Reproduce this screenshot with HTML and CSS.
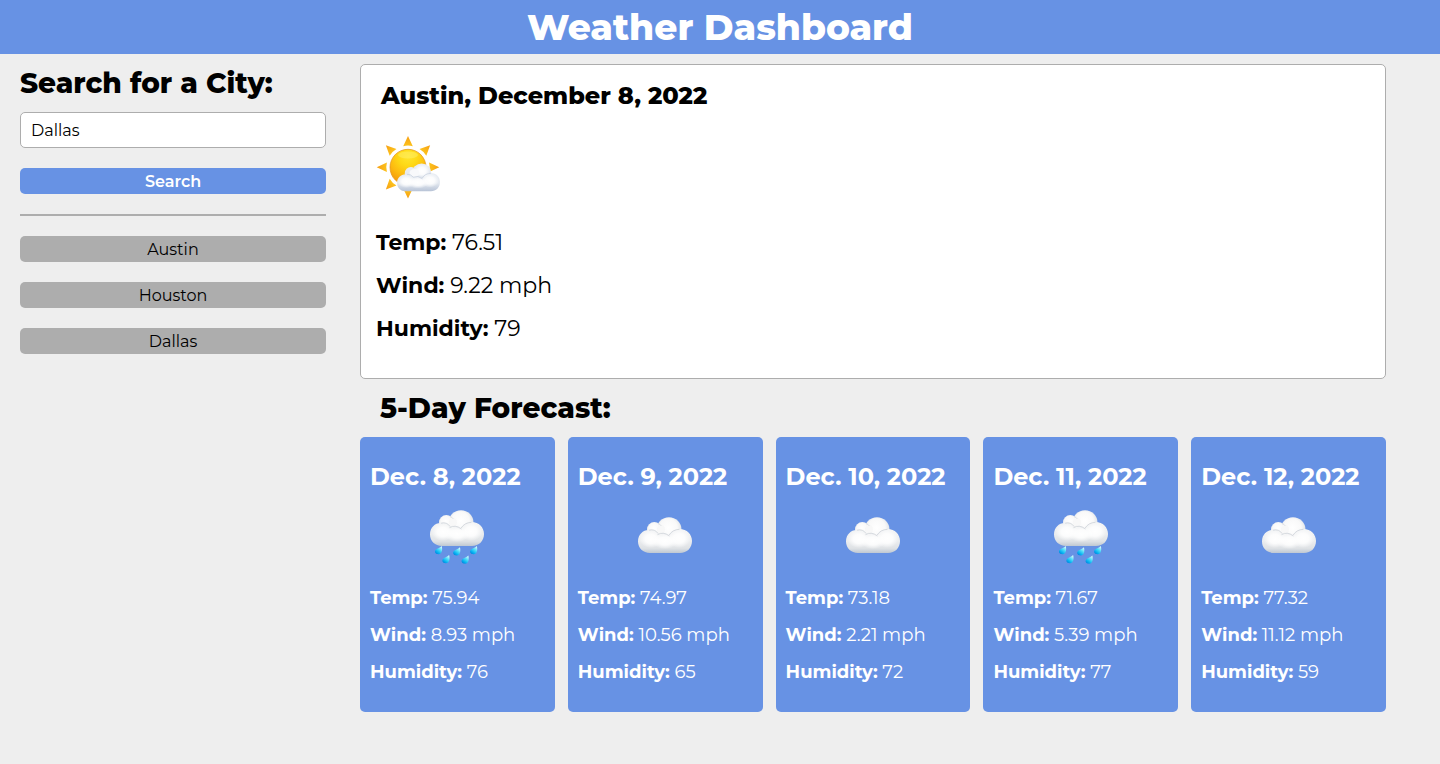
FILE: index.html
```html
<!DOCTYPE html>
<html lang="en">
<head>
<meta charset="utf-8">
<meta name="viewport" content="width=device-width, initial-scale=1">
<title>Weather Dashboard</title>
<link rel="stylesheet" href="styles.css">
</head>
<body>
<svg class="sprite" aria-hidden="true">
  <defs>
    <radialGradient id="sun-fill" cx="0.5" cy="0.2" r="0.85">
      <stop offset="0" stop-color="#ffe52e"/>
      <stop offset="0.3" stop-color="#fed916"/>
      <stop offset="0.6" stop-color="#fdbb10"/>
      <stop offset="1" stop-color="#f08c08"/>
    </radialGradient>
    <linearGradient id="ray-fill" x1="0" y1="0" x2="0" y2="1">
      <stop offset="0" stop-color="#f79f14"/>
      <stop offset="1" stop-color="#fcc31d"/>
    </linearGradient>
    <radialGradient id="top-lobe" cx="0.48" cy="0.42" r="0.58">
      <stop offset="0" stop-color="#ffffff"/>
      <stop offset="0.6" stop-color="#f9f9f9"/>
      <stop offset="1" stop-color="#d9dde2"/>
    </radialGradient>
    <linearGradient id="cloud-fill" x1="0" y1="0" x2="0" y2="1">
      <stop offset="0" stop-color="#f3f4f5"/>
      <stop offset="0.5" stop-color="#ebedef"/>
      <stop offset="0.8" stop-color="#dfe2e5"/>
      <stop offset="1" stop-color="#bfc8d2"/>
    </linearGradient>
    <radialGradient id="shine" cx="0.5" cy="0.5" r="0.5">
      <stop offset="0" stop-color="#fff"/>
      <stop offset="0.5" stop-color="#fff" stop-opacity="0.85"/>
      <stop offset="1" stop-color="#fff" stop-opacity="0"/>
    </radialGradient>
    <linearGradient id="small-fill" x1="0" y1="0" x2="0" y2="1">
      <stop offset="0" stop-color="#eaeef4"/>
      <stop offset="0.55" stop-color="#e4e9f0"/>
      <stop offset="1" stop-color="#b7c3d6"/>
    </linearGradient>
    <linearGradient id="drop-fill" x1="0.9" y1="0.1" x2="0.3" y2="1">
      <stop offset="0" stop-color="#d5fbfd"/>
      <stop offset="0.4" stop-color="#52dcf8"/>
      <stop offset="0.75" stop-color="#08b4f2"/>
      <stop offset="1" stop-color="#0089e0"/>
    </linearGradient>
    <filter id="soft" x="-20%" y="-20%" width="140%" height="140%"><feGaussianBlur stdDeviation="0.5"/></filter>
    <path id="ray" d="M32 0L36.8 10.2Q32 8.9 27.2 10.2Z" fill="url(#ray-fill)"/>
    <path id="drop" d="M3.2 -4.2C4 -1.6 4.1 3.9 0 4.1C-4 4 -4.4 .6 -2.2 -.9C-.2 -2.2 1.8 -2.8 3.2 -4.2Z" fill="url(#drop-fill)"/>
  </defs>
  <symbol id="cloud" viewBox="0 0 54 36">
    <circle cx="31" cy="12.7" r="12.5" fill="url(#top-lobe)"/>
    <circle cx="16.3" cy="12.3" r="7.3" fill="url(#top-lobe)"/>
    <path d="M12 36C5 36 0 31 0 24.5C0 17.5 5 13 10.5 13Q17 12 20 17Q25 14 31 18Q35 12 41.5 12C49 12 54 17.5 54 24C54 31 49 36 42 36Z" fill="url(#cloud-fill)"/>
    <ellipse cx="41" cy="21.5" rx="11.5" ry="9.5" fill="url(#shine)"/>
    <ellipse cx="13" cy="22" rx="11.5" ry="9" fill="url(#shine)"/>
    <ellipse cx="27" cy="24" rx="13" ry="8" fill="url(#shine)"/>
    <ellipse cx="23" cy="12.5" rx="4" ry="5" fill="#f8f8f8" filter="url(#soft)"/>
    <path d="M11 13.2Q17 11.7 19.9 16.4M19.5 17.7Q25 14.2 31.5 19M31.2 18Q34.5 12.6 41.5 12.3" fill="none" stroke="#cdd2d8" stroke-width="0.8" filter="url(#soft)"/>
    <path d="M20 6.5Q22.5 7.2 23.3 9" fill="none" stroke="#d3d8dd" stroke-width="0.7" filter="url(#soft)"/>
  </symbol>
  <symbol id="icon-cloudy" viewBox="0 0 54 54">
    <use href="#cloud" y="7" width="54" height="36"/>
  </symbol>
  <symbol id="icon-rain" viewBox="0 0 54 54">
    <use href="#cloud" width="54" height="36"/>
    <use href="#drop" x="8.5" y="40.2"/>
    <use href="#drop" x="26.7" y="41.5"/>
    <use href="#drop" x="43.6" y="40.2"/>
    <use href="#drop" x="15.9" y="49.2"/>
    <use href="#drop" x="35.1" y="49.6"/>
  </symbol>
  <symbol id="icon-partly" viewBox="0 0 64 64">
    <use href="#ray"/>
    <use href="#ray" transform="rotate(45 32 31.3)"/>
    <use href="#ray" transform="rotate(90 32 31.3)"/>
    <use href="#ray" transform="rotate(180 32 31.3)"/>
    <use href="#ray" transform="rotate(225 32 31.3)"/>
    <use href="#ray" transform="rotate(270 32 31.3)"/>
    <use href="#ray" transform="rotate(315 32 31.3)"/>
    <circle cx="32" cy="31.3" r="18" fill="url(#sun-fill)" stroke="#e2921a" stroke-width="0.7"/>
    <ellipse cx="32" cy="19" rx="10" ry="3.5" fill="#fff06a" opacity="0.5" filter="url(#soft)"/>
    <circle cx="45.7" cy="37.2" r="9.7" fill="url(#small-fill)"/>
    <circle cx="35" cy="37.2" r="6.2" fill="url(#small-fill)"/>
    <path d="M29.5 55.3C24.5 55.3 21 51.5 21 47C21 42 25 38.3 29.5 38.3Q34 38 37 41Q42 39 46 42.5Q49 37 55 37C60.5 37 64 41.3 64 46C64 51.3 60 55.3 55 55.3Z" fill="url(#small-fill)"/>
    <ellipse cx="54" cy="44.5" rx="9" ry="7" fill="url(#shine)"/>
    <ellipse cx="30.5" cy="45.5" rx="9" ry="6.5" fill="url(#shine)"/>
    <ellipse cx="42" cy="46.5" rx="11" ry="6" fill="url(#shine)"/>
    <ellipse cx="46" cy="35" rx="8" ry="7" fill="url(#shine)"/>
    <ellipse cx="38.5" cy="37" rx="5" ry="4" fill="#f8f9fb" filter="url(#soft)"/>
    <path d="M31 38.3Q35 38 37.3 41.2Q42 39 46.5 42.8M46.3 42Q49 37.5 55 37.3" fill="none" stroke="#c9d2e0" stroke-width="0.8" filter="url(#soft)"/>
  </symbol>
</svg>

<header class="banner"><h1 class="banner-title">Weather Dashboard</h1></header>

<div class="layout">
  <aside class="sidebar">
    <form class="search" onsubmit="return false">
      <label class="section-title" for="city">Search for a City:</label>
      <input class="city-input" id="city" type="text" value="Dallas">
      <button class="btn btn-search" type="submit">Search</button>
    </form>
    <hr class="divider">
    <button class="btn" type="button">Austin</button>
    <button class="btn" type="button">Houston</button>
    <button class="btn" type="button">Dallas</button>
  </aside>

  <main class="content">
    <section class="today">
      <h2 class="today-title">Austin, December 8, 2022</h2>
      <svg class="today-icon" role="img" aria-label="Partly cloudy"><use href="#icon-partly"/></svg>
      <p class="today-row"><b>Temp:</b> 76.51</p>
      <p class="today-row"><b>Wind:</b> 9.22 mph</p>
      <p class="today-row"><b>Humidity:</b> 79</p>
    </section>
    <h2 class="section-title forecast-title">5-Day Forecast:</h2>
    <section class="forecast">
      <article class="day">
        <h3 class="day-title">Dec. 8, 2022</h3>
        <svg class="day-icon" role="img" aria-label="Rain"><use href="#icon-rain"/></svg>
        <p class="day-row"><b>Temp:</b> 75.94</p>
        <p class="day-row"><b>Wind:</b> 8.93 mph</p>
        <p class="day-row"><b>Humidity:</b> 76</p>
      </article>
      <article class="day">
        <h3 class="day-title">Dec. 9, 2022</h3>
        <svg class="day-icon" role="img" aria-label="Cloudy"><use href="#icon-cloudy"/></svg>
        <p class="day-row"><b>Temp:</b> 74.97</p>
        <p class="day-row"><b>Wind:</b> 10.56 mph</p>
        <p class="day-row"><b>Humidity:</b> 65</p>
      </article>
      <article class="day">
        <h3 class="day-title">Dec. 10, 2022</h3>
        <svg class="day-icon" role="img" aria-label="Cloudy"><use href="#icon-cloudy"/></svg>
        <p class="day-row"><b>Temp:</b> 73.18</p>
        <p class="day-row"><b>Wind:</b> 2.21 mph</p>
        <p class="day-row"><b>Humidity:</b> 72</p>
      </article>
      <article class="day">
        <h3 class="day-title">Dec. 11, 2022</h3>
        <svg class="day-icon" role="img" aria-label="Rain"><use href="#icon-rain"/></svg>
        <p class="day-row"><b>Temp:</b> 71.67</p>
        <p class="day-row"><b>Wind:</b> 5.39 mph</p>
        <p class="day-row"><b>Humidity:</b> 77</p>
      </article>
      <article class="day">
        <h3 class="day-title">Dec. 12, 2022</h3>
        <svg class="day-icon" role="img" aria-label="Cloudy"><use href="#icon-cloudy"/></svg>
        <p class="day-row"><b>Temp:</b> 77.32</p>
        <p class="day-row"><b>Wind:</b> 11.12 mph</p>
        <p class="day-row"><b>Humidity:</b> 59</p>
      </article>
    </section>
  </main>
</div>
</body>
</html>
```
FILE: styles.css
```css
* {
  box-sizing: border-box;
  margin: 0;
  padding: 0;
}

body {
  background: #eeeeee;
  color: #000;
  font-family: Montserrat, Inter, sans-serif;
  font-size: 16px;
}

.sprite {
  position: absolute;
  width: 0;
  height: 0;
}

.banner {
  background: #6792e4;
  color: #fff;
  text-align: center;
}

.banner-title {
  font-size: 36px;
  font-weight: 800;
  line-height: 54px;
}

.layout {
  display: grid;
  grid-template-columns: minmax(0, 17fr) minmax(0, 57fr);
  column-gap: 34px;
  padding: 10px 54px 20px 20px;
}

.sidebar,
.search {
  display: flex;
  flex-direction: column;
  gap: 20px;
}

.section-title {
  font-size: 28px;
  font-weight: 800;
  line-height: 38px;
}

.search .section-title {
  margin-bottom: -10px;
}

.city-input {
  width: 100%;
  height: 36px;
  padding: 0 10px;
  border: 1px solid #adadad;
  border-radius: 5px;
  background: #fff;
  color: #000;
  font: inherit;
}

.btn {
  width: 100%;
  padding-top: 1px;
  border: 0;
  border-radius: 5px;
  background: #adadad;
  color: #000;
  font: inherit;
  line-height: 25px;
}

.btn-search {
  background: #6792e4;
  color: #fff;
  font-weight: 600;
}

.divider {
  border: 0;
  border-top: 2px solid #adadad;
}

.today {
  padding: 16px 15px 35px;
  border: 1px solid #adadad;
  border-radius: 5px;
  background: #fff;
}

.today-title {
  padding-left: 5px;
  font-size: 24px;
  font-weight: 800;
  line-height: 30px;
}

.today-icon {
  display: block;
  width: 64px;
  height: 64px;
  margin: 25px 0 29px;
}

.today-row {
  font-size: 22px;
  line-height: 28px;
}

.today-row + .today-row,
.day-row + .day-row {
  margin-top: 15px;
}

.forecast-title {
  margin: 10px 0;
  padding-left: 20px;
}

.forecast {
  display: grid;
  grid-template-columns: repeat(5, minmax(0, 1fr));
  gap: 13px;
}

.day {
  padding: 20px 10px 29px;
  border-radius: 5px;
  background: #6792e4;
  color: #fff;
}

.day-title {
  font-size: 24px;
  font-weight: 700;
  line-height: 40px;
  white-space: nowrap;
}

.day-icon {
  display: block;
  width: 54px;
  height: 54px;
  margin: 13px auto 23px;
}

.day-row {
  font-size: 18px;
  line-height: 22px;
}
```
